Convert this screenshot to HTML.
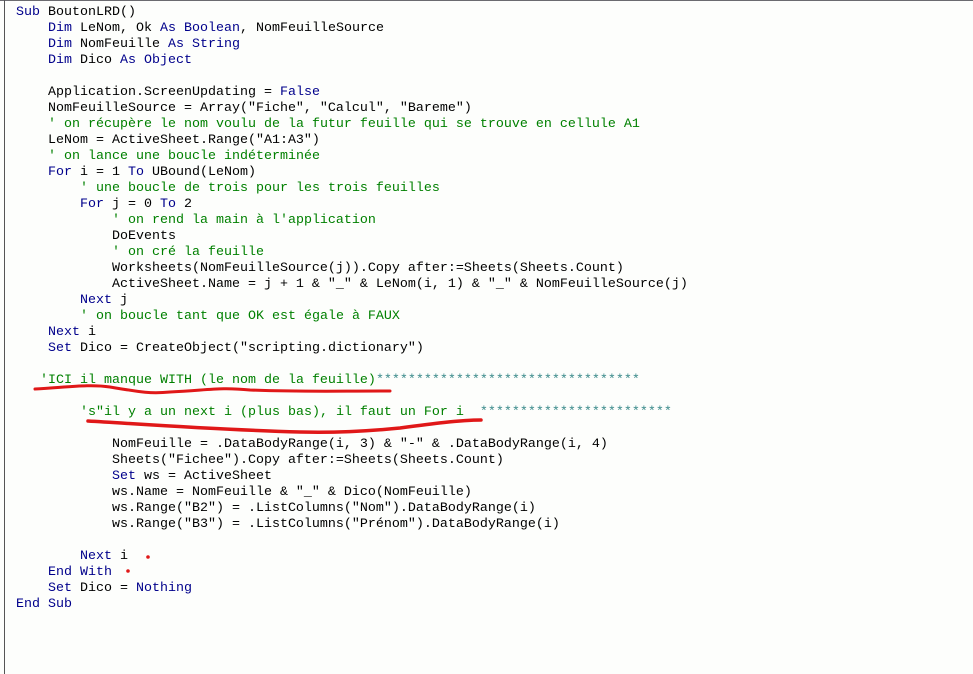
<!DOCTYPE html>
<html><head><meta charset="utf-8">
<style>
html,body{margin:0;padding:0;background:#fdfefc;width:973px;height:674px;overflow:hidden;position:relative}
#top{position:absolute;left:0;top:0;width:973px;height:1px;background:#6b6b70}
#left{position:absolute;left:4px;top:0;width:1px;height:674px;background:#555}
pre{position:absolute;left:16px;top:5px;margin:0;font-family:"Liberation Mono",monospace;font-size:13.33px;line-height:16px;color:#000;white-space:pre}
.k{color:#00008b}.c{color:#008000}.s{color:#3a8a8a}
svg{position:absolute;left:0;top:0}
</style></head><body>
<div id="top"></div><div id="left"></div>
<pre><span class="k">Sub</span> BoutonLRD()
    <span class="k">Dim</span> LeNom, Ok <span class="k">As Boolean</span>, NomFeuilleSource
    <span class="k">Dim</span> NomFeuille <span class="k">As String</span>
    <span class="k">Dim</span> Dico <span class="k">As Object</span>

    Application.ScreenUpdating = <span class="k">False</span>
    NomFeuilleSource = Array("Fiche", "Calcul", "Bareme")
    <span class="c">' on récupère le nom voulu de la futur feuille qui se trouve en cellule A1</span>
    LeNom = ActiveSheet.Range("A1:A3")
    <span class="c">' on lance une boucle indéterminée</span>
    <span class="k">For</span> i = 1 <span class="k">To</span> UBound(LeNom)
        <span class="c">' une boucle de trois pour les trois feuilles</span>
        <span class="k">For</span> j = 0 <span class="k">To</span> 2
            <span class="c">' on rend la main à l'application</span>
            DoEvents
            <span class="c">' on cré la feuille</span>
            Worksheets(NomFeuilleSource(j)).Copy after:=Sheets(Sheets.Count)
            ActiveSheet.Name = j + 1 &amp; "_" &amp; LeNom(i, 1) &amp; "_" &amp; NomFeuilleSource(j)
        <span class="k">Next</span> j
        <span class="c">' on boucle tant que OK est égale à FAUX</span>
    <span class="k">Next</span> i
    <span class="k">Set</span> Dico = CreateObject("scripting.dictionary")

   <span class="c">'ICI il manque WITH (le nom de la feuille)</span><span class="s">*********************************</span>

        <span class="c">'s"il y a un next i (plus bas), il faut un For i  </span><span class="s">************************</span>

            NomFeuille = .DataBodyRange(i, 3) &amp; "-" &amp; .DataBodyRange(i, 4)
            Sheets("Fichee").Copy after:=Sheets(Sheets.Count)
            <span class="k">Set</span> ws = ActiveSheet
            ws.Name = NomFeuille &amp; "_" &amp; Dico(NomFeuille)
            ws.Range("B2") = .ListColumns("Nom").DataBodyRange(i)
            ws.Range("B3") = .ListColumns("Prénom").DataBodyRange(i)

        <span class="k">Next</span> i
    <span class="k">End With</span>
    <span class="k">Set</span> Dico = <span class="k">Nothing</span>
<span class="k">End Sub</span></pre>
<svg width="973" height="674" viewBox="0 0 973 674">
<path d="M35 389 C70 387 90 384 110 387 C140 392 150 394 170 392 C210 390 220 387 250 390 C300 392 330 391 390 391" fill="none" stroke="#e01818" stroke-width="3" stroke-linecap="round"/>
<path d="M88 421 C140 424 220 430 300 432 C340 433 370 431 400 428 C430 424 460 420 481 420" fill="none" stroke="#e01818" stroke-width="3.5" stroke-linecap="round"/>
<circle cx="148" cy="557" r="1.8" fill="#e01818"/>
<circle cx="128" cy="571" r="1.8" fill="#e01818"/>
</svg>
</body></html>
